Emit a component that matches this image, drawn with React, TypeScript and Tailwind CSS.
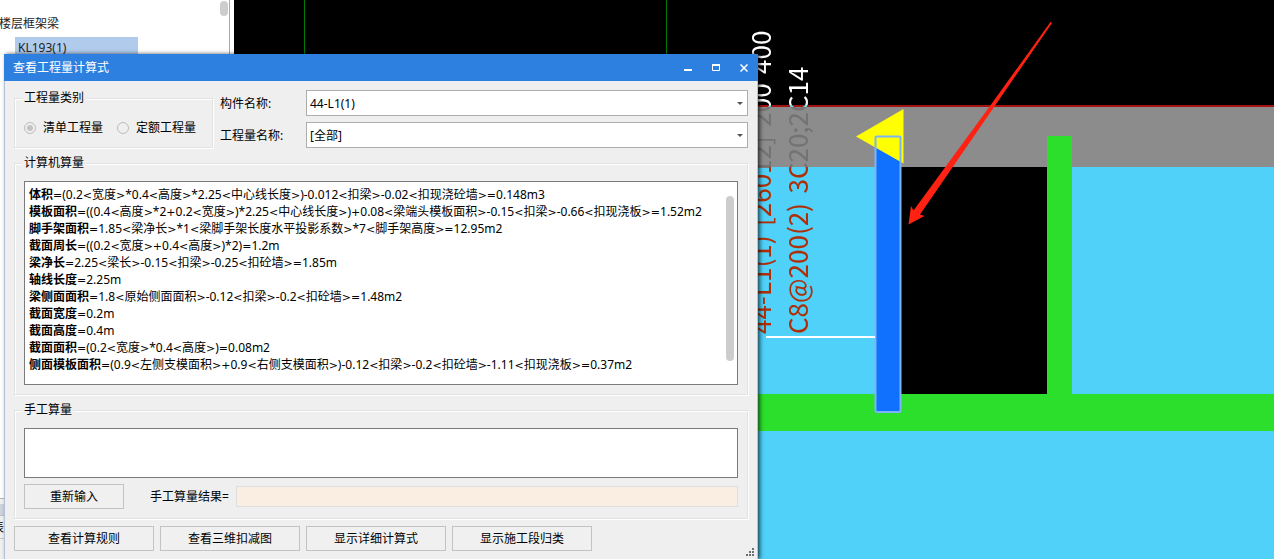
import React from 'react';

const formulas = [
  { label: '体积', text: '=(0.2<宽度>*0.4<高度>*2.25<中心线长度>)-0.012<扣梁>-0.02<扣现浇砼墙>=0.148m3' },
  { label: '模板面积', text: '=((0.4<高度>*2+0.2<宽度>)*2.25<中心线长度>)+0.08<梁端头模板面积>-0.15<扣梁>-0.66<扣现浇板>=1.52m2' },
  { label: '脚手架面积', text: '=1.85<梁净长>*1<梁脚手架长度水平投影系数>*7<脚手架高度>=12.95m2' },
  { label: '截面周长', text: '=((0.2<宽度>+0.4<高度>)*2)=1.2m' },
  { label: '梁净长', text: '=2.25<梁长>-0.15<扣梁>-0.25<扣砼墙>=1.85m' },
  { label: '轴线长度', text: '=2.25m' },
  { label: '梁侧面面积', text: '=1.8<原始侧面面积>-0.12<扣梁>-0.2<扣砼墙>=1.48m2' },
  { label: '截面宽度', text: '=0.2m' },
  { label: '截面高度', text: '=0.4m' },
  { label: '截面面积', text: '=(0.2<宽度>*0.4<高度>)=0.08m2' },
  { label: '侧面模板面积', text: '=(0.9<左侧支模面积>+0.9<右侧支模面积>)-0.12<扣梁>-0.2<扣砼墙>-1.11<扣现浇板>=0.37m2' },
];

const actions = ['查看计算规则', '查看三维扣减图', '显示详细计算式', '显示施工段归类'];

const buttonClass = 'h-[25px] border border-[#c3c3c3] bg-[#f0f0f0] text-center hover:bg-[#e5f1fb]';

interface GroupProps {
  title: string;
  className?: string;
  children: React.ReactNode;
}

function Group({ title, className = '', children }: GroupProps) {
  return (
    <fieldset
      className={`min-w-0 border border-[#e2e2e2] px-[9px] pb-[9px] shadow-[1px_1px_0_#fff,inset_1px_1px_0_#fff] ${className}`}
    >
      <legend className="-ml-0.5 h-4 bg-[#efefef] px-0.5 leading-4">{title}</legend>
      {children}
    </fieldset>
  );
}

function SelectRow({ id, label, value }: { id: string; label: string; value: string }) {
  return (
    <div className="flex items-center">
      <label htmlFor={id} className="w-[86px] shrink-0 pt-0.5">{label}</label>
      <div className="relative flex-1">
        <select
          id={id}
          defaultValue={value}
          className="block h-[26px] w-full appearance-none border border-[#adadad] bg-white px-[3px] pt-0.5 outline-none"
        >
          <option>{value}</option>
        </select>
        <svg className="pointer-events-none absolute right-[5px] top-3" width="6" height="3" viewBox="0 0 6 3">
          <path d="M0 0h6L3 3z" fill="#555" />
        </svg>
      </div>
    </div>
  );
}

// Operators are set in a wider face than the digits
function Formula({ text }: { text: string }) {
  return (
    <>
      {text.split(/([<>=+]+)/).map((part, i) =>
        i % 2 === 1 ? <span key={i} className="font-['DejaVu_Sans',sans-serif] text-[11px]">{part}</span> : part
      )}
    </>
  );
}

function ComponentTree() {
  return (
    <aside className="flex w-[234px] shrink-0 flex-col bg-white">
      <div className="flex flex-1">
        <div className="flex-1 overflow-hidden pt-[15px] text-[#222]">
          <div className="-ml-px leading-[18px]">楼层框架梁</div>
          <div className="ml-[15px] mt-1 w-[123px] bg-[#b1cbec] px-[3px] leading-[21px]">KL193(1)</div>
        </div>
        <div className="flex w-3 justify-center border-r border-[#a8a8a8] pt-px">
          <div className="h-[15px] w-2 rounded-full bg-[#cdcdcd]" />
        </div>
        <div className="w-1" />
      </div>
      <div className="h-[61px] border-t border-[#b5b5b5] bg-[#f0f0f0] pt-[5px]">
        <div className="h-3 border-b border-[#b9bfc9] bg-[#cfd3dc]" />
        <div className="-ml-2 border-b border-[#c8c8c8] pt-0.5 leading-5">表</div>
      </div>
    </aside>
  );
}

function DrawingCanvas() {
  // Space glyph of the CAD font is wider than the one in the text face
  const gap = <tspan fontFamily="'DejaVu Sans', sans-serif" fontSize="30"> </tspan>;

  return (
    <main className="min-w-0 flex-1 bg-black">
      <svg className="isolate block h-full w-full">
        {/* axis grid */}
        <path d="M70.5 0V106M432.5 0V106" stroke="#007a00" />
        {/* slab */}
        <rect y="167" width="100%" height="100%" fill="#4fd1f9" />
        <rect y="106" width="100%" height="61" fill="#8c8c8c" />
        <rect y="105" width="100%" height="2" fill="#a51212" />
        <rect x="666" y="167" width="147" height="228" />
        {/* walls */}
        <rect y="394" width="100%" height="37" fill="#2cdf2c" />
        <rect x="813" y="136" width="25" height="260" fill="#2cdf2c" />
        {/* selected beam */}
        <rect x="641" y="136" width="25" height="276" fill="#1171ff" />
        <path d="M622 136.500L669.500 109V163.500z" fill="#ff0" />
        <rect x="641.500" y="136.500" width="25" height="275.500" rx="1" fill="none" stroke="#7db4f7" strokeWidth="2" />
        <path d="M532 337H641" stroke="#fff" strokeWidth="2" />
        {/* beam annotation */}
        <g
          className="mix-blend-difference"
          fill="#fff"
          fontSize="26"
          fontFamily="'Noto Sans CJK SC', sans-serif"
          xmlSpace="preserve"
        >
          <text transform="translate(537 334) rotate(-90)">44-L1(1){gap}[26012]{gap}200{gap}400</text>
          <text transform="translate(574 334) rotate(-90)">C8@200(2){gap}3C20;2C14</text>
        </g>
        {/* pointer arrow */}
        <path d="M816.500 22L818 23L686 214.500L690.500 216L674.500 224.500L677 206L679.500 210.500L756 106z" fill="#ff2112" />
      </svg>
    </main>
  );
}

function QuantityDialog() {
  return (
    <section
      role="dialog"
      aria-labelledby="dialog-title"
      className="absolute bottom-0 left-1 top-[54px] flex w-[754px] flex-col bg-[#efefef] shadow-[2px_0_4px_rgba(0,0,0,0.65)]"
    >
      <header className="flex h-[27px] shrink-0 items-center bg-[#2d7fe0] pl-[9px] text-white">
        <h1 id="dialog-title" className="flex-1">查看工程量计算式</h1>
        <button aria-label="最小化" className="flex h-full w-7 items-center justify-center">
          <svg width="8" height="8"><path d="M0 6H8" stroke="#fff" strokeWidth="2" /></svg>
        </button>
        <button aria-label="最大化" className="flex h-full w-7 items-center justify-center">
          <svg width="8" height="8" fill="none" stroke="#fff">
            <path d="M.5 1V6.500H7.500V1" />
            <path d="M0 1H8" strokeWidth="2" />
          </svg>
        </button>
        <button aria-label="关闭" className="flex h-full w-7 items-center justify-center">
          <svg width="8" height="8"><path d="M.5 .5L7.500 7.500M7.500 .5L.5 7.500" stroke="#fff" strokeWidth="1.500" /></svg>
        </button>
      </header>

      <div className="flex flex-1 flex-col gap-[7px] border-x border-[#b4c2d6] px-[9px] pt-[9px]">
        <div className="flex gap-[7px]">
          <Group title="工程量类别" className="w-[199px]">
            <div className="flex items-center gap-[14px] pt-[13px]">
              <label className="flex items-center gap-[7px] leading-[18px]">
                <input
                  type="radio"
                  name="category"
                  defaultChecked
                  disabled
                  className="size-3 appearance-none rounded-full border border-[#bcbcbc] bg-[#c3c3c3] bg-clip-content p-0.5"
                />
                清单工程量
              </label>
              <label className="flex items-center gap-[7px] leading-[18px]">
                <input
                  type="radio"
                  name="category"
                  disabled
                  className="size-3 appearance-none rounded-full border border-[#bcbcbc]"
                />
                定额工程量
              </label>
            </div>
          </Group>
          <div className="flex flex-1 flex-col gap-1.5">
            <SelectRow id="component" label="构件名称:" value="44-L1(1)" />
            <SelectRow id="quantity" label="工程量名称:" value="[全部]" />
          </div>
        </div>

        <Group title="计算机算量">
          <div className="mt-[10px] flex h-[204px] overflow-hidden border border-[#7a7a7a] bg-white">
            <div className="flex-1 whitespace-nowrap pl-1 pt-1 leading-[17px]">
              {formulas.map((row) => (
                <p key={row.label} className="h-[17px]">
                  <b>{row.label}</b>
                  <Formula text={row.text} />
                </p>
              ))}
            </div>
            <div className="w-[11px] pt-[14px]">
              <div className="h-[165px] w-2 rounded-full bg-[#cdcdcd]" />
            </div>
          </div>
        </Group>

        <Group title="手工算量">
          <textarea
            aria-label="手工算量"
            className="mt-[10px] block h-[50px] w-full resize-none border border-[#7a7a7a] bg-white outline-none"
          />
          <div className="mt-1.5 flex items-center">
            <button className={`w-[100px] ${buttonClass}`}>重新输入</button>
            <label htmlFor="result" className="ml-[26px] w-[86px]">手工算量结果=</label>
            <input id="result" readOnly className="h-[21px] flex-1 border border-[#dedede] bg-[#faeee3] outline-none" />
          </div>
        </Group>

        <footer className="flex gap-1.5">
          {actions.map((action) => (
            <button key={action} className={`w-[140px] ${buttonClass}`}>{action}</button>
          ))}
        </footer>
      </div>

      {/* resize grip */}
      <svg className="absolute bottom-[3px] right-1" width="8" height="8" fill="#6d7078">
        <path d="M6 0h2v2H6zM6 3h2v2H6zM3 3h2v2H3zM6 6h2v2H6zM3 6h2v2H3zM0 6h2v2H0z" />
      </svg>
    </section>
  );
}

export default function App() {
  return (
    <div className="relative flex h-screen overflow-hidden font-['Noto_Sans','Noto_Sans_CJK_SC',sans-serif] text-[12px] leading-[18px] text-black">
      <ComponentTree />
      <DrawingCanvas />
      <QuantityDialog />
    </div>
  );
}
